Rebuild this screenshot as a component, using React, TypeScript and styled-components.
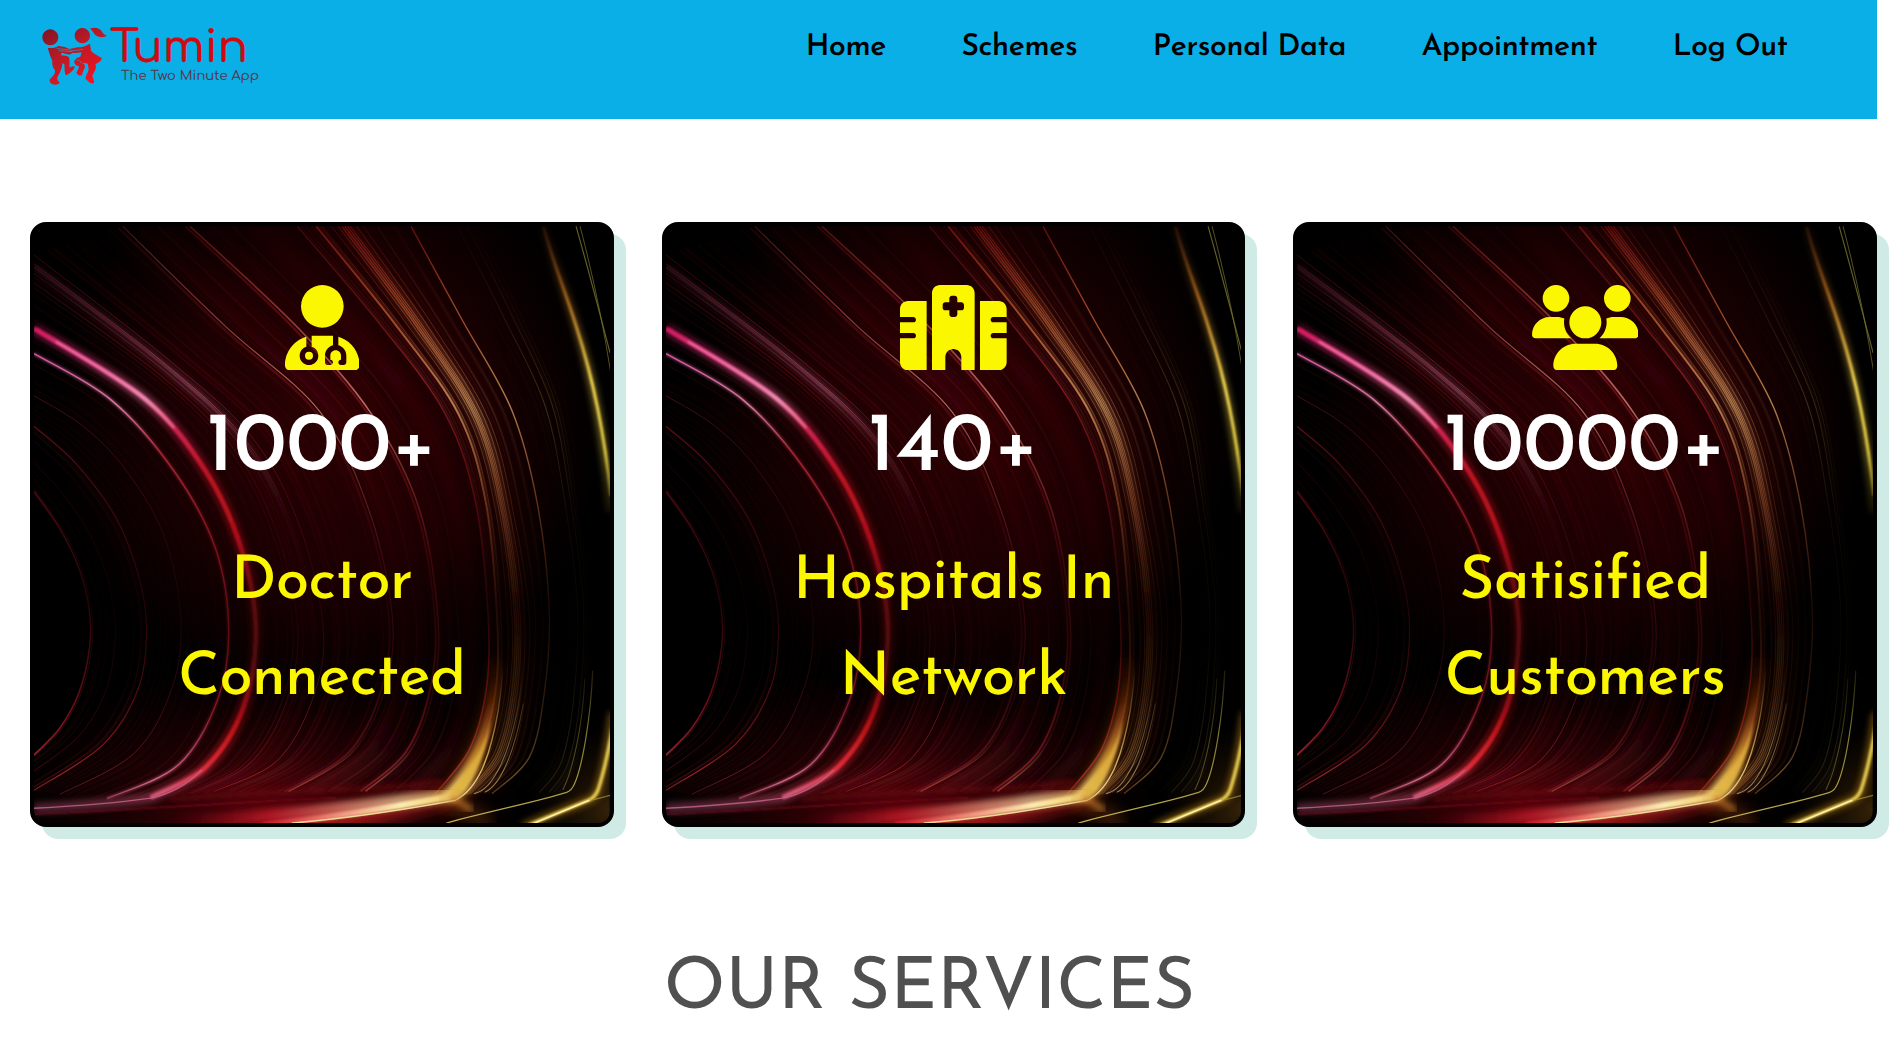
import React from "react";
import styled, { createGlobalStyle } from "styled-components";
import { FaUserDoctor, FaHospital, FaUsers } from "react-icons/fa6";

const GlobalStyle = createGlobalStyle`
  *, *::before, *::after { box-sizing: border-box; }
  html { overflow: hidden; background: #fff; }
  body {
    margin: 0;
    overflow: hidden;
    font-family: "Josefin Sans", Lato, sans-serif;
    text-rendering: geometricPrecision;
  }
`;

const Page = styled.div`
  width: 1877px;
  height: 1048px;
`;

const Header = styled.header`
  display: flex;
  justify-content: space-between;
  align-items: flex-start;
  height: 119px;
  padding: 0 89.5px 0 35px;
  background: #0bafe7;
`;

const Brand = styled.a`
  display: flex;
  padding-top: 20px;
`;

const Wordmark = styled.div`
  display: flex;
  flex-direction: column;
  margin: 8.5px 0 0 -5px;
`;

const BrandName = styled.span`
  font: 500 44.5px/40px Comfortaa, Quicksand, sans-serif;
  color: #cf0a10;
  -webkit-text-stroke: 0.3px #cf0a10;
`;

const Tagline = styled.span`
  margin-left: 11px;
  font: 500 13.1px/15px Comfortaa, Quicksand, sans-serif;
  color: #5a3547;
  white-space: nowrap;
`;

const Nav = styled.nav`
  display: flex;
  gap: 75.5px;
  padding-top: 29px;
`;

const NavLink = styled.a`
  font-size: 30px;
  font-weight: 600;
  line-height: 38px;
  letter-spacing: -0.35px;
  color: #000;
  white-space: nowrap;
`;

const Stats = styled.section`
  display: grid;
  grid-template-columns: repeat(3, 1fr);
  gap: 48px;
  padding: 103px 0 0 30px;
`;

const Card = styled.article`
  position: relative;
  display: flex;
  flex-direction: column;
  align-items: center;
  height: 605px;
  padding-top: 59px;
  border: 4px solid #000;
  border-radius: 16px;
  background: #000;
  box-shadow: 12px 12px 0 #d0ebe6;
`;

const Backdrop = styled.svg`
  position: absolute;
  inset: 0;
  width: 100%;
  height: 100%;
  border-radius: 12px;
`;

const IconBox = styled.div<{ $width: number }>`
  position: relative;
  display: flex;
  width: ${p => p.$width}px;
  height: 85.33px;
  color: #fbf700;
  svg { width: 100%; height: 100%; }
`;

const Count = styled.div`
  position: relative;
  margin-top: 37px;
  font-size: 84px;
  font-weight: 500;
  line-height: 84px;
  color: #fff;
`;

const Label = styled.div`
  position: relative;
  display: flex;
  flex-direction: column;
  align-items: center;
  margin-top: 43.5px;
`;

const LabelLine = styled.span`
  font-size: 60px;
  font-weight: 500;
  line-height: 96px;
  letter-spacing: -0.4px;
  color: #fbf700;
`;

const Title = styled.h2`
  margin: 119px 0 0;
  padding-right: 18px;
  text-align: center;
  font-size: 72px;
  font-weight: 400;
  line-height: 88px;
  color: #505050;
`;

/* ---- light-trail artwork behind each card ---- */

type Pt = [number, number];

const rails: Pt[][] = [
  [[35, 690], [100, 780], [150, 880], [175, 980], [176, 1070], [150, 1180], [100, 1270], [35, 1335]],
  [[35, 530], [140, 620], [240, 750], [298, 890], [320, 1020], [300, 1170], [210, 1310], [35, 1422]],
  [[35, 455], [160, 530], [270, 640], [365, 800], [407, 1000], [385, 1170], [290, 1330], [100, 1432]],
  [[35, 352], [230, 465], [390, 640], [495, 830], [528, 1030], [500, 1200], [400, 1360], [220, 1442]],
  [[35, 290], [315, 462], [470, 640], [560, 830], [597, 1030], [565, 1220], [470, 1365], [330, 1440]],
  [[35, 110], [380, 370], [590, 560], [710, 780], [768, 1030], [740, 1200], [650, 1350], [490, 1425]],
  [[260, 40], [520, 285], [760, 495], [885, 740], [943, 1000], [922, 1180], [840, 1330], [680, 1425]],
  [[430, 40], [700, 285], [890, 500], [1010, 730], [1058, 1000], [1045, 1180], [985, 1330], [875, 1424]],
  [[750, 40], [950, 280], [1110, 500], [1180, 720], [1208, 1000], [1205, 1170], [1165, 1320], [1075, 1440]],
  [[870, 40], [1050, 290], [1190, 520], [1255, 770], [1290, 1000], [1278, 1200], [1240, 1350], [1165, 1428]],
  [[990, 40], [1120, 270], [1245, 490], [1310, 720], [1340, 980], [1328, 1180], [1290, 1340], [1195, 1430]],
  [[1180, 40], [1290, 260], [1380, 470], [1420, 700], [1455, 960], [1448, 1200], [1420, 1360], [1388, 1426]],
];

const mix = (a: number, b: number, t: number) => a + (b - a) * t;

function railAt(pos: number): Pt[] {
  const i = Math.min(rails.length - 2, Math.floor(pos));
  const t = pos - i;
  return rails[i].map(([x, y], k) => [mix(x, rails[i + 1][k][0], t), mix(y, rails[i + 1][k][1], t)] as Pt);
}

function smooth(p: Pt[]): string {
  let d = `M${p[0][0].toFixed(1)} ${p[0][1].toFixed(1)}`;
  for (let i = 0; i < p.length - 1; i++) {
    const a = p[Math.max(0, i - 1)], b = p[i], c = p[i + 1], e = p[Math.min(p.length - 1, i + 2)];
    const n = [b[0] + (c[0] - a[0]) / 6, b[1] + (c[1] - a[1]) / 6, c[0] - (e[0] - b[0]) / 6, c[1] - (e[1] - b[1]) / 6, c[0], c[1]];
    d += `C${n.map(v => v.toFixed(1)).join(" ")}`;
  }
  return d;
}

let seed = 11;
const random = () => {
  seed = (seed * 16807) % 2147483647;
  return seed / 2147483647;
};

const filaments = Array.from({ length: 170 }, () => {
  const pos = random() * 10.99;
  const dim = pos < 4 || pos > 9.3 ? 0.5 : 1;
  return {
    d: smooth(railAt(pos)),
    tone: pos > 7.8 ? (pos > 10 ? "olive" : "amber") : "red",
    width: 1.2 + random() * 3.4,
    opacity: dim * (0.03 + Math.pow(random(), 3) * 0.22),
  };
});

const bands = Array.from({ length: 22 }, () => {
  const pos = 4.4 + random() * 5.2;
  return { d: smooth(railAt(pos)), width: 8 + random() * 22, opacity: 0.04 + random() * 0.08 };
});

const strands: { pos: number; width: number; tone: string; opacity: number }[] = [
  { pos: 0, width: 4, tone: "red", opacity: 0.95 },
  { pos: 0.04, width: 2, tone: "red", opacity: 0.6 },
  { pos: 0.45, width: 2, tone: "red", opacity: 0.4 },
  { pos: 1, width: 3, tone: "red", opacity: 0.8 },
  { pos: 0.9, width: 2, tone: "red", opacity: 0.4 },
  { pos: 2, width: 2.4, tone: "red", opacity: 0.55 },
  { pos: 4.55, width: 2, tone: "red", opacity: 0.4 },
  { pos: 4.62, width: 2.5, tone: "red", opacity: 0.4 },
  { pos: 4.75, width: 2, tone: "dusk", opacity: 0.6 },
  { pos: 4.84, width: 6, tone: "dusk", opacity: 0.4 },
  { pos: 4.88, width: 2.4, tone: "dusk", opacity: 0.8 },
  { pos: 5, width: 2.4, tone: "red", opacity: 0.7 },
  { pos: 5.35, width: 2, tone: "red", opacity: 0.25 },
  { pos: 5.95, width: 6, tone: "red", opacity: 0.4 },
  { pos: 6, width: 3, tone: "rose", opacity: 0.85 },
  { pos: 7, width: 4, tone: "rose", opacity: 0.85 },
  { pos: 6.93, width: 4, tone: "red", opacity: 0.55 },
  { pos: 7.85, width: 4, tone: "red", opacity: 0.85 },
  { pos: 8, width: 5, tone: "amber", opacity: 0.9 },
  { pos: 8.12, width: 2, tone: "amber", opacity: 0.6 },
  { pos: 8.32, width: 2, tone: "amber", opacity: 0.5 },
  { pos: 8.46, width: 2.5, tone: "amber", opacity: 0.6 },
  { pos: 8.54, width: 3, tone: "amber", opacity: 0.75 },
  { pos: 8.6, width: 3, tone: "amber", opacity: 0.75 },
  { pos: 8.66, width: 2.5, tone: "amber", opacity: 0.8 },
  { pos: 8.72, width: 2.5, tone: "amber", opacity: 0.7 },
  { pos: 8.85, width: 3, tone: "amber", opacity: 0.5 },
  { pos: 9, width: 2, tone: "amber", opacity: 0.5 },
  { pos: 10, width: 3.5, tone: "amber", opacity: 0.9 },
  { pos: 10.75, width: 2.5, tone: "olive", opacity: 0.5 },
  { pos: 10.82, width: 2, tone: "olive", opacity: 0.4 },
];

const magenta = smooth(rails[4]) + "C250 1453 150 1461 35 1466";
const pinkLine = smooth(rails[3]);

const tones: Record<string, [number, string, number][]> = {
  red: [[0, "#701018", 0.5], [0.25, "#a8202a", 0.85], [0.45, "#80101a", 0.65], [0.63, "#500a10", 0.45], [0.8, "#8c141e", 0.75], [0.92, "#c83038", 0.9], [1, "#a02830", 0.4]],
  dusk: [[0, "#6a1020", 0.3], [0.12, "#983048", 0.6], [0.28, "#a8506c", 1], [0.36, "#843040", 0.7], [0.5, "#501018", 0.3], [0.7, "#400810", 0.15], [1, "#801420", 0.4]],
  rose: [[0, "#802020", 0.6], [0.15, "#a84840", 0.9], [0.3, "#cc7c74", 1], [0.4, "#904038", 0.8], [0.56, "#600c14", 0.6], [0.85, "#401010", 0.5], [0.95, "#b06858", 0.9], [1, "#c08060", 0.8]],
  amber: [[0, "#901414", 0.7], [0.12, "#a84824", 0.95], [0.3, "#c48c54", 1], [0.46, "#8c4824", 0.75], [0.64, "#4c1c0e", 0.4], [0.78, "#6c3818", 0.45], [0.92, "#b88038", 0.6], [1, "#b88040", 0.3]],
  olive: [[0, "#2a0c08", 0.4], [0.3, "#6a5420", 0.9], [0.5, "#33250c", 0.4], [0.7, "#2c2008", 0.3], [0.88, "#6c6430", 0.5], [1, "#807438", 0.3]],
  trim: [[0.7, "#2c2008", 0.3], [0.85, "#8c8434", 0.9], [1, "#c0b050", 1]],
  hot: [[0.17, "#e81c68", 1], [0.22, "#f03c88", 1], [0.29, "#f87cac", 1], [0.34, "#e02858", 1], [0.42, "#cc1424", 1], [0.52, "#c4121c", 0.95], [0.62, "#7a0a12", 0.75], [0.72, "#6c0a10", 0.7], [0.84, "#d01418", 0.95], [0.9, "#f02c38", 1], [0.95, "#e86080", 1], [0.98, "#c06088", 0.9]],
  pink: [[0.2, "#d0509c", 1], [0.3, "#d8789c", 1], [0.38, "#b02838", 0.9], [0.52, "#901620", 0.8], [0.68, "#701018", 0.65], [0.82, "#8c1c2c", 0.85], [0.93, "#d06484", 1], [0.97, "#a03c58", 0.6]],
  gold: [[0, "#6a3010", 0.3], [0.12, "#b06c20", 0.9], [0.26, "#f4d850", 1], [0.38, "#e0c840", 1], [0.5, "#907c24", 0.3]],
};

const LightTrails = ({ id }: { id: string }) => (
  <Backdrop viewBox="35 39 1458 1463" preserveAspectRatio="none" aria-hidden="true">
    <defs>
      <radialGradient id={`${id}-core`} gradientUnits="userSpaceOnUse" cx="780" cy="520" r="700">
        <stop offset="0" stopColor="#280103" />
        <stop offset="0.55" stopColor="#1a0002" />
        <stop offset="1" stopColor="#000" />
      </radialGradient>
      <radialGradient id={`${id}-floor`} gradientUnits="userSpaceOnUse" cx="620" cy="1480" r="660" gradientTransform="matrix(1 0 0 .55 0 666)">
        <stop offset="0" stopColor="#60040c" stopOpacity="0.95" />
        <stop offset="0.4" stopColor="#360206" stopOpacity="0.7" />
        <stop offset="1" stopColor="#200002" stopOpacity="0" />
      </radialGradient>
      <radialGradient id={`${id}-corner`} gradientUnits="userSpaceOnUse" cx="1490" cy="1470" r="210">
        <stop offset="0" stopColor="#4a300c" stopOpacity="0.7" />
        <stop offset="1" stopColor="#201004" stopOpacity="0" />
      </radialGradient>
      {Object.entries(tones).map(([name, stops]) => (
        <linearGradient key={name} id={`${id}-${name}`} gradientUnits="userSpaceOnUse" x1="0" y1="40" x2="0" y2="1500">
          {stops.map(([o, c, a]) => <stop key={o} offset={o} stopColor={c} stopOpacity={a} />)}
        </linearGradient>
      ))}
      <linearGradient id={`${id}-flare`} gradientUnits="userSpaceOnUse" x1="1200" y1="1080" x2="1110" y2="1440">
        <stop offset="0" stopColor="#7a2408" stopOpacity="0" />
        <stop offset="0.4" stopColor="#a85018" stopOpacity="0.85" />
        <stop offset="0.72" stopColor="#d09430" />
        <stop offset="1" stopColor="#f0d470" />
      </linearGradient>
      <linearGradient id={`${id}-fade`} gradientUnits="userSpaceOnUse" x1="0" y1="1120" x2="0" y2="1440">
        <stop offset="0" stopColor="#c89c50" stopOpacity="0" />
        <stop offset="0.7" stopColor="#d8b860" stopOpacity="0.9" />
        <stop offset="1" stopColor="#f0dc90" />
      </linearGradient>
      <linearGradient id={`${id}-beam`} gradientUnits="userSpaceOnUse" x1="380" y1="0" x2="1110" y2="0">
        <stop offset="0" stopColor="#a00c20" stopOpacity="0" />
        <stop offset="0.35" stopColor="#d02030" />
        <stop offset="0.6" stopColor="#f09880" />
        <stop offset="0.8" stopColor="#fcecb0" />
        <stop offset="1" stopColor="#f0c860" />
      </linearGradient>
      <filter id={`${id}-b3`} x="-20%" y="-20%" width="140%" height="140%"><feGaussianBlur stdDeviation="2.5" /></filter>
      <filter id={`${id}-b8`} x="-20%" y="-20%" width="140%" height="140%"><feGaussianBlur stdDeviation="8" /></filter>
      <filter id={`${id}-b20`} x="-30%" y="-60%" width="160%" height="220%"><feGaussianBlur stdDeviation="20" /></filter>
    </defs>

    <rect x="35" y="39" width="1458" height="1463" fill="#010000" />
    <rect x="35" y="39" width="1458" height="1463" fill={`url(#${id}-core)`} />
    <rect x="35" y="39" width="1458" height="1463" fill={`url(#${id}-floor)`} />
    <rect x="35" y="39" width="1458" height="1463" fill={`url(#${id}-corner)`} />

    <g fill="none" filter={`url(#${id}-b8)`}>
      {bands.map((b, i) => <path key={i} d={b.d} stroke={`url(#${id}-red)`} strokeWidth={b.width} opacity={b.opacity} />)}
      <path d={smooth(railAt(8.6))} stroke={`url(#${id}-amber)`} strokeWidth="24" opacity="0.3" />
      <path d={smooth(railAt(4.85))} stroke={`url(#${id}-dusk)`} strokeWidth="20" opacity="0.4" />
    </g>
    <g fill="none">
      {filaments.map((f, i) => <path key={i} d={f.d} stroke={`url(#${id}-${f.tone})`} strokeWidth={f.width} opacity={f.opacity} />)}
      {strands.map((s, i) => <path key={i} d={smooth(railAt(s.pos))} stroke={`url(#${id}-${s.tone})`} strokeWidth={s.width} opacity={s.opacity} />)}
    </g>

    <g fill="none">
      <path d={magenta} stroke={`url(#${id}-hot)`} strokeWidth="26" opacity="0.4" filter={`url(#${id}-b8)`} />
      <path d={smooth(rails[4])} stroke={`url(#${id}-hot)`} strokeWidth="12" opacity="0.85" filter={`url(#${id}-b3)`} />
      <path d="M90 322C190 378 262 420 316 462C345 486 365 506 390 534" stroke="#ffb8d0" strokeWidth="4" opacity="0.65" filter={`url(#${id}-b3)`} />
      <path d={pinkLine} stroke={`url(#${id}-pink)`} strokeWidth="9" opacity="0.45" filter={`url(#${id}-b3)`} />
      <path d={pinkLine} stroke={`url(#${id}-pink)`} strokeWidth="3.5" />
      <path d="M460 1372C420 1410 380 1432 330 1441C250 1452 150 1460 35 1466" stroke="#c46088" strokeWidth="3.5" opacity="0.85" />
      <path d="M35 1480C300 1470 520 1452 800 1440" stroke="#8c1024" strokeWidth="4" opacity="0.6" filter={`url(#${id}-b3)`} />
      <path d="M380 1444C600 1420 860 1430 1070 1400" stroke="#7a0c18" strokeWidth="14" opacity="0.5" filter={`url(#${id}-b8)`} />
    </g>

    <path d="M380 1540L1060 1425L1110 1450L760 1540Z" fill="#b81c1c" opacity="0.8" filter={`url(#${id}-b20)`} />
    <path d="M1200 1100C1190 1240 1120 1380 1040 1450L1100 1462C1170 1390 1215 1250 1208 1100Z" fill="#8a3010" opacity="0.6" filter={`url(#${id}-b20)`} />
    <path d="M1208 1090C1196 1240 1150 1350 1066 1436C1080 1450 1110 1446 1130 1424C1180 1350 1204 1230 1208 1090Z" fill={`url(#${id}-flare)`} filter={`url(#${id}-b8)`} />
    <path d="M1192 1250C1176 1320 1130 1390 1078 1434L1108 1440C1156 1390 1182 1320 1192 1250Z" fill="#e0b440" opacity="0.8" filter={`url(#${id}-b3)`} />
    <g fill="none" strokeLinecap="round">
      <path d="M380 1498C640 1490 860 1462 1090 1434" stroke={`url(#${id}-beam)`} strokeWidth="32" opacity="0.65" filter={`url(#${id}-b8)`} />
      <path d="M620 1506C780 1490 930 1466 1085 1438" stroke={`url(#${id}-beam)`} strokeWidth="15" filter={`url(#${id}-b3)`} />
      <path d="M690 1502C840 1490 980 1468 1100 1447C1160 1420 1190 1340 1210 1230C1218 1180 1222 1140 1222 1110" stroke={`url(#${id}-fade)`} strokeWidth="3.5" />
      <path d="M1150 1430C1200 1420 1240 1330 1262 1210C1268 1180 1270 1140 1270 1110" stroke={`url(#${id}-fade)`} strokeWidth="2.5" opacity="0.6" />
      <path d="M1178 1426C1216 1410 1252 1330 1274 1210" stroke={`url(#${id}-fade)`} strokeWidth="2.5" opacity="0.6" />
      <path d="M1090 1450L1180 1500" stroke="#a05018" strokeWidth="30" opacity="0.45" filter={`url(#${id}-b20)`} />
      <path d="M1095 1440L1140 1468" stroke="#e09030" strokeWidth="16" opacity="0.6" filter={`url(#${id}-b8)`} />
      <path d="M1080 1502C1200 1470 1310 1450 1384 1427Q1396 1424 1404 1406C1425 1360 1445 1240 1450 1130" stroke={`url(#${id}-trim)`} strokeWidth="3" />
      <path d="M1375 1420C1400 1370 1424 1270 1430 1150" stroke={`url(#${id}-trim)`} strokeWidth="2.5" opacity="0.5" />
      <path d="M1280 1508L1440 1446Q1456 1440 1464 1420Q1484 1360 1500 1240" stroke="#a87818" strokeWidth="22" opacity="0.55" filter={`url(#${id}-b8)`} />
      <path d="M1290 1506L1440 1446Q1456 1440 1464 1420Q1484 1360 1500 1270" stroke="#e4cc50" strokeWidth="9" filter={`url(#${id}-b3)`} />
      <path d="M1300 1503L1440 1447" stroke="#fff0b0" strokeWidth="4" />
      <path d="M1455 1444L1496 1434" stroke="#b09838" strokeWidth="3" opacity="0.7" />
    </g>
    <g fill="none">
      <path d="M1325 40C1350 130 1385 210 1410 290C1450 410 1480 550 1496 740" stroke={`url(#${id}-gold)`} strokeWidth="20" opacity="0.4" filter={`url(#${id}-b8)`} />
      <path d="M1325 40C1350 130 1385 210 1410 290C1450 410 1480 550 1496 700" stroke={`url(#${id}-gold)`} strokeWidth="7.5" filter={`url(#${id}-b3)`} />
      <path d="M1408 40C1440 150 1470 260 1494 350" stroke="#7c7430" strokeWidth="3" opacity="0.8" />
      <path d="M1418 40C1448 150 1475 270 1496 400" stroke="#787030" strokeWidth="2.5" opacity="0.7" />
      <path d={smooth(railAt(10.62))} stroke={`url(#${id}-olive)`} strokeWidth="2.5" opacity="0.6" />
    </g>
  </Backdrop>
);

const DancingKids = () => (
  <svg width="80" height="70" viewBox="0 0 240 210" aria-hidden="true">
    <defs>
      <linearGradient id="kids" x1="0" y1="0" x2="0.75" y2="1">
        <stop offset="0" stopColor="#7d1424" />
        <stop offset="0.45" stopColor="#b81a26" />
        <stop offset="1" stopColor="#f51420" />
      </linearGradient>
    </defs>
    <g fill="url(#kids)">
      <path d="M46 28A24 24 0 1 1 45.9 28ZM142 24A23 23 0 1 1 141.9 24ZM165 26C182 20 196 25 202 37C206 43 210 46 216 48C204 54 188 52 180 44C174 37 173 30 165 26ZM38 83C50 86 62 83 70 78C84 80 96 82 103 87L128 82C140 82 154 78 164 71C168 80 167 88 168 93C178 103 192 108 201 115C197 126 188 130 181 132C186 142 180 154 172 166C173 175 179 184 177 189C168 193 160 186 152 176C150 168 160 158 161 146L158 131C150 129 146 128 142 128C150 132 152 138 148 146C144 154 142 160 141 166C134 168 127 164 124 158C128 152 131 146 132 139C124 138 117 132 118 124C122 114 130 112 136 110L140 97C130 99 120 100 113 98C108 104 100 104 94 102L80 98L78 106C88 107 97 107 102 112C105 124 103 136 104 143C110 139 117 137 120 141C116 151 104 160 94 166C88 162 89 148 88 132L82 130C82 144 76 156 67 172C65 180 72 184 74 189C70 195 58 195 51 192C42 186 42 178 49 173C58 166 61 158 60 151C52 142 51 130 52 122C46 110 42 96 38 83Z" />
    </g>
    <g fill="none" stroke="#24a0d0" strokeWidth="2.5" opacity="0.75">
      <path d="M64 84C80 90 96 86 110 92M70 92C84 92 98 96 112 94M112 91C124 94 134 88 144 88M126 122C132 118 138 122 138 130" />
    </g>
  </svg>
);

const links = ["Home", "Schemes", "Personal Data", "Appointment", "Log Out"];

const stats = [
  { id: "doctors", Icon: FaUserDoctor, iconWidth: 74.67, count: "1000+", label: ["Doctor", "Connected"] },
  { id: "hospitals", Icon: FaHospital, iconWidth: 106.67, count: "140+", label: ["Hospitals In", "Network"] },
  { id: "customers", Icon: FaUsers, iconWidth: 106.67, count: "10000+", label: ["Satisified", "Customers"] },
];

export default function App() {
  return (
    <Page>
      <GlobalStyle />
      <Header>
        <Brand>
          <DancingKids />
          <Wordmark>
            <BrandName>Tumin</BrandName>
            <Tagline>The Two Minute App</Tagline>
          </Wordmark>
        </Brand>
        <Nav>
          {links.map(text => <NavLink key={text}>{text}</NavLink>)}
        </Nav>
      </Header>
      <Stats>
        {stats.map(({ id, Icon, iconWidth, count, label }) => (
          <Card key={id}>
            <LightTrails id={id} />
            <IconBox $width={iconWidth}><Icon /></IconBox>
            <Count>{count}</Count>
            <Label>
              {label.map(text => <LabelLine key={text}>{text}</LabelLine>)}
            </Label>
          </Card>
        ))}
      </Stats>
      <Title>OUR SERVICES</Title>
    </Page>
  );
}
